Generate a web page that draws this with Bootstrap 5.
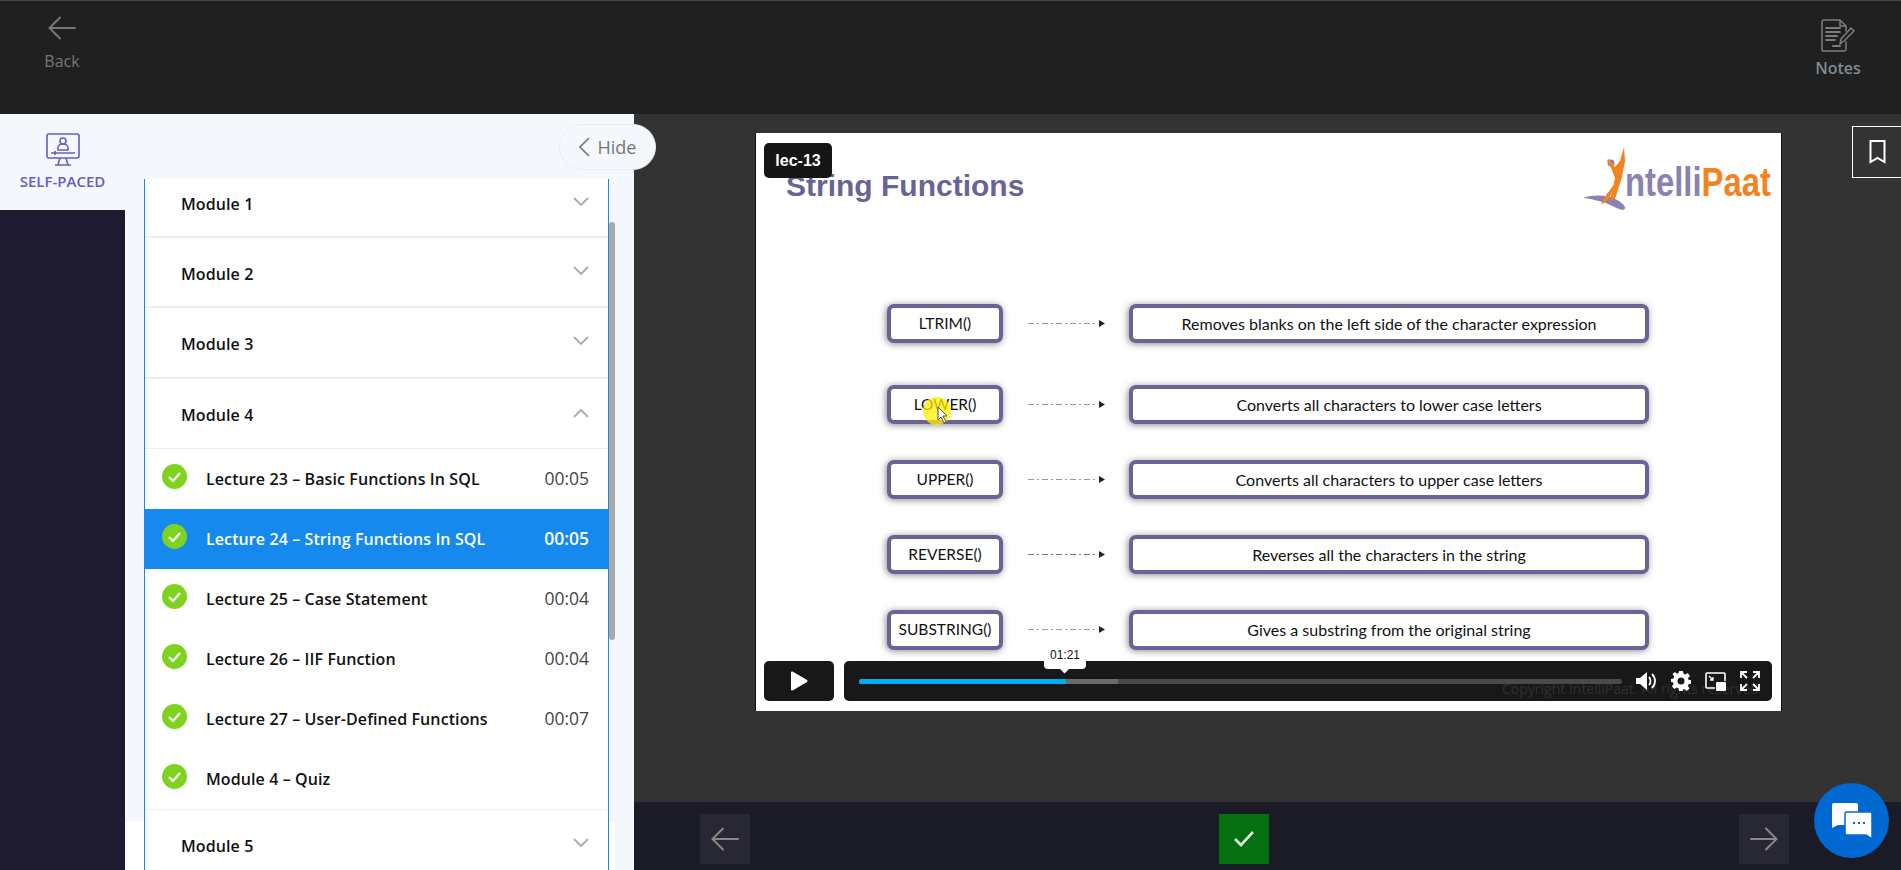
<!DOCTYPE html>
<html lang="en">
<head>
  <meta charset="UTF-8" />
  <meta name="viewport" content="width=device-width, initial-scale=1.0"/>
  <title>Lecture 24 – String Functions In SQL</title>
  <link href="https://cdn.jsdelivr.net/npm/bootstrap@5.3.3/dist/css/bootstrap.min.css" rel="stylesheet">
  <style>
      body {
          background: #333;
          font-family: "Open Sans", "Noto Sans", sans-serif;
          height: 870px;
          overflow: hidden;
      }
      .top-strip {
          height: 114px;
          background: #202020;
          border-top: 1px solid #484848;
      }
      .back-box {
          width: 124px;
          padding-top: 15px;
          color: #777;
          font-size: 16px;
      }
      .back-box span { margin-top: 9px; }
      .notes-box {
          width: 126px;
          padding-top: 18px;
          color: #7f8a96;
          font-size: 16px;
          font-weight: 600;
      }
      .notes-box span { margin-top: 4px; }
      .page-body { height: 756px; }
      .side-panel {
          width: 634px;
          background: #f4f7fb;
          flex: none;
      }
      .tab-col { width: 125px; flex: none; background: #1e1b30; }
      .tab-head {
          height: 96px;
          background: #f4f7fb;
          padding-top: 19px;
          color: #6a5cc4;
          font-size: 15px;
          font-weight: 600;
          white-space: nowrap;
      }
      .tab-head svg { margin-bottom: 4px; }
      .list-col {
          width: 490px;
          padding: 65px 0 0 19px;
          background: linear-gradient(#f4f7fb 708px, #fff 708px);
      }
      .module-list {
          width: 465px;
          background: #fff;
          border-left: 1px solid #1589ee;
          border-right: 1px solid #1589ee;
          color: #111;
      }
      .module-row {
          height: 70.33px;
          padding: 3px 19px 0 36px;
          border-bottom: 2px solid #eee;
          font-size: 16px;
          font-weight: 600;
          letter-spacing: .1px;
      }
      .module-row.first-row { height: 59px; padding-bottom: 10px; }
      .module-row.open-row { border-bottom-width: 1px; }
      .chev { margin-top: -6px; }
      .open-chev { margin-top: -3px; }
      .lec-row {
          height: 60px;
          padding: 15px 19px 0 17px;
          font-size: 16px;
          font-weight: 600;
          letter-spacing: .1px;
      }
      .lec-row .lec-name { margin-left: 19px; margin-top: 3px; }
      .lec-row .lec-time { color: #444; font-size: 17.5px; font-weight: 500; letter-spacing: 0; margin-top: 1px; }
      .lec-row.active-row { background: #1589ee; color: #fff; margin: 0 -1px; padding-left: 18px; padding-right: 20px; }
      .active-row .lec-time { color: #fff; font-weight: 600; }
      .lec-last { height: 61px; border-bottom: 1px solid #eee; }
      .scroll-thumb {
          width: 6px;
          height: 418px;
          margin-top: 43px;
          background: #a9a9a9;
          border-radius: 3px;
      }
      .hide-pill {
          top: 10px;
          left: 559px;
          width: 97px;
          height: 46px;
          background: #f4f7fb;
          border: 1px solid #e9edf2;
          border-radius: 23px;
          color: #777;
          font-size: 18px;
          font-weight: 500;
          z-index: 3;
      }
      .main-col { min-width: 0; }
      .stage { height: 688px; padding: 19px 0 0 121px; }
      .slide {
          width: 1027px;
          height: 578px;
          background: #fff;
          border-left: 1px solid #111;
          border-right: 1px solid #111;
      }
      .lec-tag {
          top: 10px;
          left: 8px;
          width: 68px;
          height: 35px;
          background: #161616;
          color: #fff;
          border-radius: 5px;
          font: bold 16px "Liberation Sans", sans-serif;
      }
      .slide-head { height: 171px; padding: 14px 10px 0 30px; }
      .slide-title {
          margin-top: 20px;
          font: bold 30px/38px "Liberation Sans", sans-serif;
          color: #6a6496;
      }
      .logo-word {
          font: bold 41px/41px "Liberation Sans", sans-serif;
          transform: scaleX(.8);
          transform-origin: left center;
          width: 146px;
          margin-left: -2px;
          margin-top: 15px;
          color: #8a82b0;
          white-space: nowrap;
      }
      .logo-word span { color: #f58220; }
      .fn-row { margin-left: 131px; margin-bottom: 36px; height: 39px; }
      .fn-row.wide-gap { margin-bottom: 42px; }
      .fn-row.tall-row { height: 40px; }
      .fn-box, .desc-box {
          border: 4px solid #6a6496;
          border-radius: 7px;
          background: #fff;
          box-shadow: -1px 1px 7px rgba(60, 60, 60, .6);
          font-family: Lato, sans-serif;
          color: #111;
      }
      .fn-box { width: 116px; font-size: 15.5px; }
      .desc-box { width: 520px; font-size: 16px; }
      .dash-arrow { width: 77px; margin: 0 24px 0 25px; }
      .cursor-spot {
          left: 32px;
          top: 8px;
          width: 28px;
          height: 28px;
          border-radius: 50%;
          background: rgba(255, 238, 0, .75);
      }
      .cursor-mark { left: 46px; top: 17px; }
      .play-box {
          left: 8px;
          top: 528px;
          width: 70px;
          height: 40px;
          background: #181818;
          border-radius: 5px;
      }
      .ctrl-bar {
          left: 88px;
          top: 528px;
          width: 928px;
          height: 40px;
          background: #181818;
          border-radius: 5px;
          padding-left: 15px;
      }
      .copy-note {
          left: 658px;
          top: 18px;
          font-size: 14px;
          line-height: 20px;
          color: #303030;
          white-space: nowrap;
      }
      .track { width: 763px; height: 5px; background: #4a4a4a; border-radius: 3px; }
      .track-buf { width: 259px; height: 5px; background: #6b6b6b; border-radius: 3px 0 0 3px; }
      .track-done { width: 207px; height: 5px; background: #00adef; border-radius: 3px 0 0 3px; }
      .time-tip {
          left: 185px;
          top: -34px;
          width: 42px;
          height: 24px;
          background: #fff;
          border-radius: 4px;
          color: #111;
          font: 12px/20px "Liberation Sans", sans-serif;
          text-align: center;
      }
      .time-tip::after {
          content: "";
          position: absolute;
          left: 17px;
          bottom: -3px;
          width: 7px;
          height: 7px;
          background: #fff;
          transform: rotate(45deg);
      }
      .ctrl-icons { left: 792px; top: 10px; gap: 14px; }
      .bookmark-btn {
          right: 0;
          top: 12px;
          width: 49px;
          height: 52px;
          border: 1px solid #fff;
          border-right: 0;
          background: #333;
      }
      .foot-bar {
          height: 68px;
          background: #1b1a27;
          padding: 12px 112px 0 66px;
      }
      .foot-btn { width: 50px; height: 50px; background: #282734; }
      .foot-btn.done-btn { background: #04700f; margin-left: -2px; }
      .chat-bubble {
          right: 12px;
          bottom: 12px;
          width: 75px;
          height: 75px;
          background: #0069d1;
          border-radius: 50%;
          z-index: 5;
      }
  </style>
</head>
<body>

  <!-- Top bar -->
  <div class="top-strip d-flex justify-content-between">
    <div class="back-box d-flex flex-column align-items-center">
      <svg width="28" height="24" viewBox="0 0 28 24" fill="none" stroke="#777" stroke-width="2" stroke-linecap="round"><path d="M27 12H2M12 1.500 1.500 12 12 22.500"/></svg>
      <span>Back</span>
    </div>
    <div class="notes-box d-flex flex-column align-items-center">
      <svg width="34" height="33" viewBox="0 0 34 33" fill="none" stroke="#7d7d7d" stroke-width="1.500" stroke-linecap="round" stroke-linejoin="round"><path d="M19 1H3a2 2 0 0 0-2 2v28a1 1 0 0 0 1 1h21a2 2 0 0 0 2-2v-7M19 1l6 6v5M19 1v6h6"/><path d="M5 9h14M5 13h14M5 17h11M5 21h9M12 27h7" stroke-width="1.800"/><path d="M19 25l1-5 10-11 3 3-10 10z"/></svg>
      <span>Notes</span>
    </div>
  </div>

  <div class="page-body d-flex">
    <!-- Course panel -->
    <div class="side-panel d-flex position-relative">
      <div class="tab-col">
        <div class="tab-head d-flex flex-column align-items-center">
          <svg width="34" height="33" viewBox="0 0 34 33" fill="none" stroke="#6a5cc4" stroke-width="1.600"><rect x="1" y="1" width="32" height="24" rx="2"/><circle cx="17" cy="8" r="3"/><path d="M12 17v-2a5 4 0 0 1 10 0v2zM5 20h24M9 18v4M12 32l2-7M22 32l-2-7M9 32h16"/></svg>
          <span>SELF-PACED</span>
        </div>
      </div>
      <div class="list-col d-flex">
        <div class="module-list">
          <div class="module-row first-row d-flex align-items-center justify-content-between">
            <span>Module 1</span>
            <svg class="chev" width="16" height="9" viewBox="0 0 16 9" fill="none" stroke="#aaa" stroke-width="1.800"><path d="M1 1l7 7 7-7"/></svg>
          </div>
          <div class="module-row d-flex align-items-center justify-content-between">
            <span>Module 2</span>
            <svg class="chev" width="16" height="9" viewBox="0 0 16 9" fill="none" stroke="#aaa" stroke-width="1.800"><path d="M1 1l7 7 7-7"/></svg>
          </div>
          <div class="module-row d-flex align-items-center justify-content-between">
            <span>Module 3</span>
            <svg class="chev" width="16" height="9" viewBox="0 0 16 9" fill="none" stroke="#aaa" stroke-width="1.800"><path d="M1 1l7 7 7-7"/></svg>
          </div>
          <div class="module-row open-row d-flex align-items-center justify-content-between">
            <span>Module 4</span>
            <svg class="open-chev" width="16" height="9" viewBox="0 0 16 9" fill="none" stroke="#aaa" stroke-width="1.800"><path d="M1 8l7-7 7 7"/></svg>
          </div>

          <div class="lec-row d-flex align-items-start">
            <svg width="25" height="25" viewBox="0 0 25 25"><circle cx="12.500" cy="12.500" r="12.500" fill="#7ed321"/><path d="M7 13l4 4 7-8" fill="none" stroke="#fff" stroke-width="2.200"/></svg>
            <span class="lec-name flex-grow-1">Lecture 23 – Basic Functions In SQL</span>
            <span class="lec-time">00:05</span>
          </div>
          <div class="lec-row active-row d-flex align-items-start">
            <svg width="25" height="25" viewBox="0 0 25 25"><circle cx="12.500" cy="12.500" r="12.500" fill="#7ed321"/><path d="M7 13l4 4 7-8" fill="none" stroke="#fff" stroke-width="2.200"/></svg>
            <span class="lec-name flex-grow-1">Lecture 24 – String Functions In SQL</span>
            <span class="lec-time">00:05</span>
          </div>
          <div class="lec-row d-flex align-items-start">
            <svg width="25" height="25" viewBox="0 0 25 25"><circle cx="12.500" cy="12.500" r="12.500" fill="#7ed321"/><path d="M7 13l4 4 7-8" fill="none" stroke="#fff" stroke-width="2.200"/></svg>
            <span class="lec-name flex-grow-1">Lecture 25 – Case Statement</span>
            <span class="lec-time">00:04</span>
          </div>
          <div class="lec-row d-flex align-items-start">
            <svg width="25" height="25" viewBox="0 0 25 25"><circle cx="12.500" cy="12.500" r="12.500" fill="#7ed321"/><path d="M7 13l4 4 7-8" fill="none" stroke="#fff" stroke-width="2.200"/></svg>
            <span class="lec-name flex-grow-1">Lecture 26 – IIF Function</span>
            <span class="lec-time">00:04</span>
          </div>
          <div class="lec-row d-flex align-items-start">
            <svg width="25" height="25" viewBox="0 0 25 25"><circle cx="12.500" cy="12.500" r="12.500" fill="#7ed321"/><path d="M7 13l4 4 7-8" fill="none" stroke="#fff" stroke-width="2.200"/></svg>
            <span class="lec-name flex-grow-1">Lecture 27 – User-Defined Functions</span>
            <span class="lec-time">00:07</span>
          </div>
          <div class="lec-row lec-last d-flex align-items-start">
            <svg width="25" height="25" viewBox="0 0 25 25"><circle cx="12.500" cy="12.500" r="12.500" fill="#7ed321"/><path d="M7 13l4 4 7-8" fill="none" stroke="#fff" stroke-width="2.200"/></svg>
            <span class="lec-name flex-grow-1">Module 4 – Quiz</span>
          </div>
          <div class="module-row d-flex align-items-center justify-content-between">
            <span>Module 5</span>
            <svg class="chev" width="16" height="9" viewBox="0 0 16 9" fill="none" stroke="#aaa" stroke-width="1.800"><path d="M1 1l7 7 7-7"/></svg>
          </div>
        </div>
        <div class="scroll-thumb"></div>
      </div>

      <div class="hide-pill position-absolute d-flex align-items-center justify-content-center gap-2">
        <svg width="11" height="20" viewBox="0 0 11 20" fill="none" stroke="#777" stroke-width="1.600"><path d="M10 1 1 10l9 9"/></svg>
        <span>Hide</span>
      </div>
    </div>

    <!-- Video -->
    <div class="main-col flex-grow-1 position-relative">
      <div class="stage">
        <div class="slide position-relative">
          <div class="slide-head d-flex justify-content-between">
            <div class="slide-title">String Functions</div>
            <div class="d-flex">
              <svg width="44" height="64" viewBox="0 0 44 64"><path d="M0 51c12-4 26-3 36 3 6 4 8 8 4 9-8-1-14-9-40-12z" fill="#8a82b0"/><circle cx="28" cy="16" r="3.500" fill="#8a82b0"/><path d="M41 0l1 14-3 16-7 22-5 1 5-22-3-8-5-10 2-1 6 8 5-6z M32 36l-6 16-8 6 3-7z" fill="#f58220"/></svg>
              <div class="logo-word">ntelli<span>Paat</span></div>
            </div>
          </div>

          <div class="fn-row wide-gap d-flex align-items-stretch">
            <div class="fn-box d-flex align-items-center justify-content-center">LTRIM()</div>
            <svg class="dash-arrow" height="39" viewBox="0 0 77 39"><path d="M0 19.500h70" stroke="#999" stroke-width="1" stroke-dasharray="6 3 2 3"/><path d="M71 16l6 3.500-6 3.500z" fill="#222"/></svg>
            <div class="desc-box d-flex align-items-center justify-content-center">Removes blanks on the left side of the character expression</div>
          </div>
          <div class="fn-row d-flex align-items-stretch">
            <div class="fn-box d-flex align-items-center justify-content-center position-relative">LOWER()
              <div class="cursor-spot position-absolute"></div>
              <svg class="cursor-mark position-absolute" width="12" height="18" viewBox="0 0 12 18"><path d="M1 1v13l3-3 3 6 2-1-3-6h4z" fill="#fff" stroke="#555"/></svg>
            </div>
            <svg class="dash-arrow" height="39" viewBox="0 0 77 39"><path d="M0 19.500h70" stroke="#999" stroke-width="1" stroke-dasharray="6 3 2 3"/><path d="M71 16l6 3.500-6 3.500z" fill="#222"/></svg>
            <div class="desc-box d-flex align-items-center justify-content-center">Converts all characters to lower case letters</div>
          </div>
          <div class="fn-row d-flex align-items-stretch">
            <div class="fn-box d-flex align-items-center justify-content-center">UPPER()</div>
            <svg class="dash-arrow" height="39" viewBox="0 0 77 39"><path d="M0 19.500h70" stroke="#999" stroke-width="1" stroke-dasharray="6 3 2 3"/><path d="M71 16l6 3.500-6 3.500z" fill="#222"/></svg>
            <div class="desc-box d-flex align-items-center justify-content-center">Converts all characters to upper case letters</div>
          </div>
          <div class="fn-row d-flex align-items-stretch">
            <div class="fn-box d-flex align-items-center justify-content-center">REVERSE()</div>
            <svg class="dash-arrow" height="39" viewBox="0 0 77 39"><path d="M0 19.500h70" stroke="#777" stroke-width="1" stroke-dasharray="6 3 2 3"/><path d="M71 16l6 3.500-6 3.500z" fill="#222"/></svg>
            <div class="desc-box d-flex align-items-center justify-content-center">Reverses all the characters in the string</div>
          </div>
          <div class="fn-row tall-row d-flex align-items-stretch">
            <div class="fn-box d-flex align-items-center justify-content-center">SUBSTRING()</div>
            <svg class="dash-arrow" height="39" viewBox="0 0 77 39"><path d="M0 19.500h70" stroke="#999" stroke-width="1" stroke-dasharray="6 3 2 3"/><path d="M71 16l6 3.500-6 3.500z" fill="#222"/></svg>
            <div class="desc-box d-flex align-items-center justify-content-center">Gives a substring from the original string</div>
          </div>

          <div class="lec-tag position-absolute d-flex align-items-center justify-content-center">lec-13</div>

          <div class="play-box position-absolute d-flex align-items-center justify-content-center">
            <svg width="18" height="20" viewBox="0 0 18 20"><path d="M1 1.500c0-1 1-1.300 2-.8l14 8.300c.7.500.7 1.500 0 2L3 19.300c-1 .5-2 .2-2-.8z" fill="#fff"/></svg>
          </div>
          <div class="ctrl-bar position-absolute d-flex align-items-center">
            <div class="copy-note position-absolute">Copyright IntelliPaat. All rights reserved</div>
            <div class="track position-relative">
              <div class="track-buf position-absolute"></div>
              <div class="track-done position-absolute"></div>
              <div class="time-tip position-absolute">01:21</div>
            </div>
            <div class="ctrl-icons position-absolute d-flex align-items-center">
              <svg width="21" height="20" viewBox="0 0 21 20" fill="none"><path d="M0 7h4l7-6v18l-7-6H0z" fill="#fff"/><path d="M13 6c2 2 2 6 0 8M16 3c4 4 4 10 0 14" stroke="#fff" stroke-width="1.800"/></svg>
              <svg width="20" height="20" viewBox="0 0 20 20"><path fill="#fff" fill-rule="evenodd" d="M8 0h4l.5 2.800 1.800.8L16.700 2 19 5l-2 2 .5 1.700 2.500.5v3.600l-2.500.5-.7 1.800 1.700 2.400-3 2.400-2-1.800-1.800.7L12 20H8l-.5-2.700-1.800-.7L3.300 18 .9 15.300l1.700-2.200-.7-1.800L0 11V8l2.500-.6.700-1.800L1.500 3 4 1l2 1.700 1.600-.7zM10 6.500a3.500 3.500 0 1 0 0 7 3.500 3.500 0 0 0 0-7z"/></svg>
              <svg width="21" height="19" viewBox="0 0 21 19" fill="none"><path d="M10 16H2a1 1 0 0 1-1-1V2a1 1 0 0 1 1-1h17a1 1 0 0 1 1 1v7" stroke="#fff" stroke-width="1.600"/><rect x="11" y="10" width="10" height="9" rx="1" fill="#fff"/><path d="M4 4l4 4M8 5v3H5" stroke="#fff" stroke-width="1.300"/></svg>
              <svg width="20" height="20" viewBox="0 0 20 20" fill="none" stroke="#fff" stroke-width="1.800"><path d="M7 7 2 2M1 7V1h6M13 7l5-5M13 1h6v6M7 13l-5 5M1 13v6h6M13 13l5 5M19 13v6h-6"/></svg>
            </div>
          </div>
        </div>
      </div>

      <div class="bookmark-btn position-absolute d-flex align-items-center justify-content-center">
        <svg width="17" height="24" viewBox="0 0 17 24" fill="none" stroke="#fff" stroke-width="2"><path d="M1.500 1h14v21l-7-4-7 4z"/></svg>
      </div>

      <div class="foot-bar d-flex justify-content-between">
        <div class="foot-btn d-flex align-items-center justify-content-center">
          <svg width="28" height="24" viewBox="0 0 28 24" fill="none" stroke="#888" stroke-width="2" stroke-linecap="round"><path d="M27 12H2M12 1.500 1.500 12 12 22.500"/></svg>
        </div>
        <div class="foot-btn done-btn d-flex align-items-center justify-content-center">
          <svg width="20" height="16" viewBox="0 0 20 16" fill="none" stroke="#dfe8df" stroke-width="2.600"><path d="M1 8l6 6L19 1"/></svg>
        </div>
        <div class="foot-btn d-flex align-items-center justify-content-center">
          <svg width="28" height="24" viewBox="0 0 28 24" fill="none" stroke="#888" stroke-width="2" stroke-linecap="round"><path d="M1 12h25M16 1.500 26.500 12 16 22.500"/></svg>
        </div>
      </div>
    </div>
  </div>

  <div class="chat-bubble position-fixed d-flex align-items-center justify-content-center">
    <svg width="40" height="36" viewBox="0 0 40 36"><path d="M2 0h22a2 2 0 0 1 2 2v20H6l-6 3V2a2 2 0 0 1 2-2z" fill="#fff"/><path d="M15 9h23a2 2 0 0 1 2 2v25l-6-4H15a2 2 0 0 1-2-2V11a2 2 0 0 1 2-2z" fill="#fff" stroke="#0069d1" stroke-width="1.500"/><path d="M21 20h2M26 20h2M31 20h2" stroke="#0069d1" stroke-width="2"/></svg>
  </div>

  <script src="https://cdn.jsdelivr.net/npm/bootstrap@5.3.3/dist/js/bootstrap.bundle.min.js"></script>
</body>
</html>
